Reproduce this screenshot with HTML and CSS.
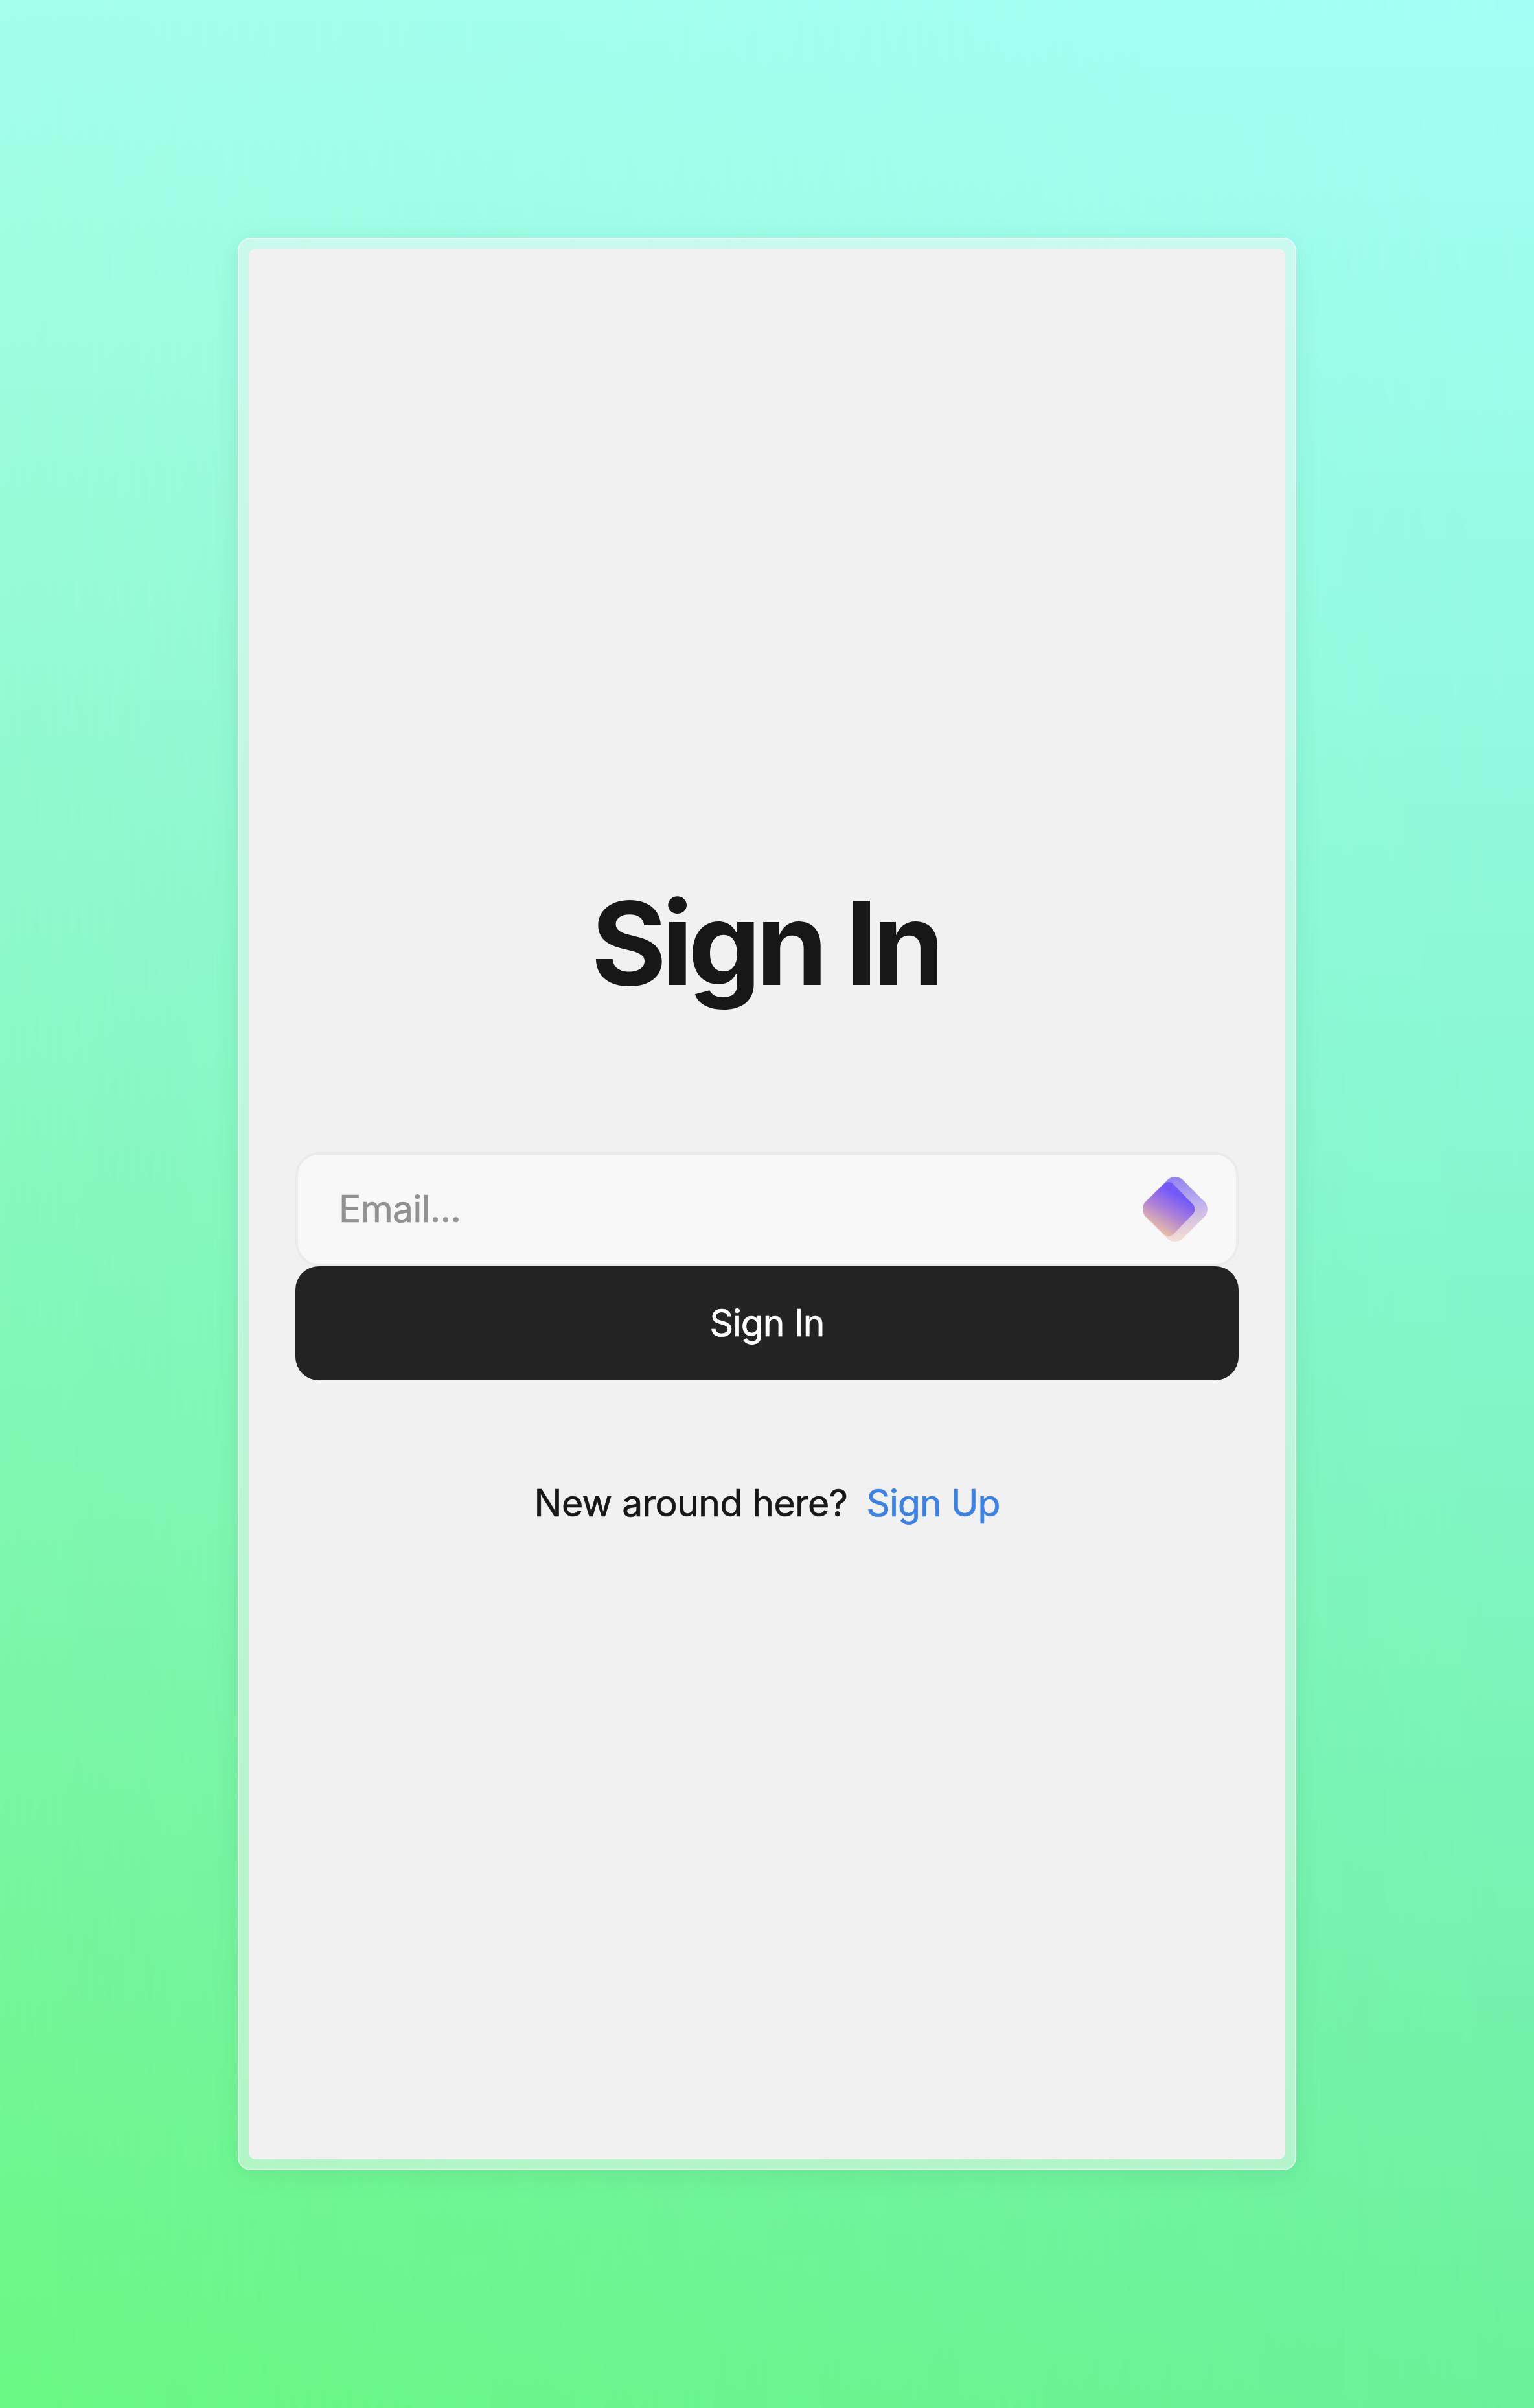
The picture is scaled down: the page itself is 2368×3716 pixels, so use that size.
FILE: index.html
```html
<!DOCTYPE html>
<html lang="en">
<head>
<meta charset="utf-8">
<title>Sign In</title>
<link rel="stylesheet" href="styles.css">
</head>
<body>
<main class="page">
  <div class="frame">
    <section class="card">
      <h1 class="title">Sign In</h1>
      <form class="form">
        <label class="field">
          <input class="input" type="email" placeholder="Email..." aria-label="Email">
          <svg class="badge" viewBox="0 0 100 100" aria-hidden="true">
            <defs>
              <linearGradient id="tint" gradientUnits="userSpaceOnUse" x1="60" y1="32" x2="27" y2="86">
                <stop offset="0" stop-color="#7559f8"/>
                <stop offset="0.5" stop-color="#b182d5"/>
                <stop offset="1" stop-color="#e9bfa4"/>
              </linearGradient>
              <linearGradient id="haze" gradientUnits="userSpaceOnUse" x1="48" y1="0" x2="58" y2="100">
                <stop offset="0" stop-color="#9180f2"/>
                <stop offset="0.4" stop-color="#baaded"/>
                <stop offset="1" stop-color="#f7dfd1"/>
              </linearGradient>
            </defs>
            <path fill="url(#haze)" d="M40 3Q50 -3 60 3L97 40Q103 50 97 60L60 97Q50 103 40 97L3 60Q-3 50 3 40Z"/>
            <path fill="url(#tint)" d="M34 10Q40 6 46 10L78 43Q83 50 78 57L46 90Q40 94 34 90L3 60Q-3 50 3 40Z"/>
          </svg>
        </label>
        <button class="submit" type="button">Sign In</button>
      </form>
      <p class="prompt">New around here?<a class="link" href="#">Sign Up</a></p>
    </section>
  </div>
</main>
</body>
</html>
```
FILE: styles.css
```css
* { box-sizing: border-box; }

body {
  margin: 0;
  font-family: Inter, "Liberation Sans", sans-serif;
  font-size: 57px;
  letter-spacing: -0.55px;
  -webkit-text-stroke: 0.7px currentColor;
  color: #171717;
}

.page {
  position: relative;
  display: grid;
  place-items: center;
  min-height: 100vh;
  background: linear-gradient(180deg, #a5ffeb 0%, #8af8c4 45%, #78f6a2 75%, #6af884 100%);
}

.page::before {
  content: "";
  position: absolute;
  inset: 0;
  background: linear-gradient(180deg, #a3fff5 0%, #8af7d4 45%, #78f3b4 77%, #6af199 100%);
  -webkit-mask-image: linear-gradient(90deg, transparent, #000);
  mask-image: linear-gradient(90deg, transparent, #000);
}

.frame {
  position: relative;
  display: flex;
  width: 1634px;
  height: 2982px;
  padding: 15px;
  border: 2px solid rgba(255, 255, 255, 0.75);
  border-radius: 20px;
  background: rgba(246, 246, 246, 0.5);
  background-clip: padding-box;
  box-shadow: 0 8px 40px rgba(0, 60, 40, 0.08);
}

.card {
  flex: 1;
  display: flex;
  flex-direction: column;
  justify-content: center;
  padding: 0 72px 13px;
  border-radius: 10px;
  background: #f1f1f1;
}

.title {
  margin: 0 0 214px;
  font-size: 178px;
  font-weight: 700;
  line-height: 216px;
  letter-spacing: -7.6px;
  text-indent: -5px;
  text-align: center;
  -webkit-text-stroke: 0;
}

.form { display: flex; flex-direction: column; }

.field {
  display: flex;
  align-items: center;
  justify-content: space-between;
  height: 176px;
  padding: 0 44px 0 63px;
  border: 4px solid #ebebeb;
  border-radius: 36px;
  background: #f8f8f8;
}

.input {
  flex: 1;
  min-width: 0;
  padding: 0 0 2px;
  border: 0;
  outline: 0;
  background: none;
  font: inherit;
  letter-spacing: -0.6px;
}

.input::placeholder { color: #919191; opacity: 1; }

.badge { width: 100px; height: 100px; }

.submit {
  height: 176px;
  padding: 0 0 1px;
  border: 0;
  border-radius: 36px;
  background: #232323;
  color: #fff;
  font: inherit;
  letter-spacing: -1px;
}

.prompt {
  display: flex;
  justify-content: center;
  gap: 29px;
  margin: 155px 0 0;
  line-height: 70px;
}

.link { color: #3b82e8; letter-spacing: -0.9px; text-decoration: none; }
```
